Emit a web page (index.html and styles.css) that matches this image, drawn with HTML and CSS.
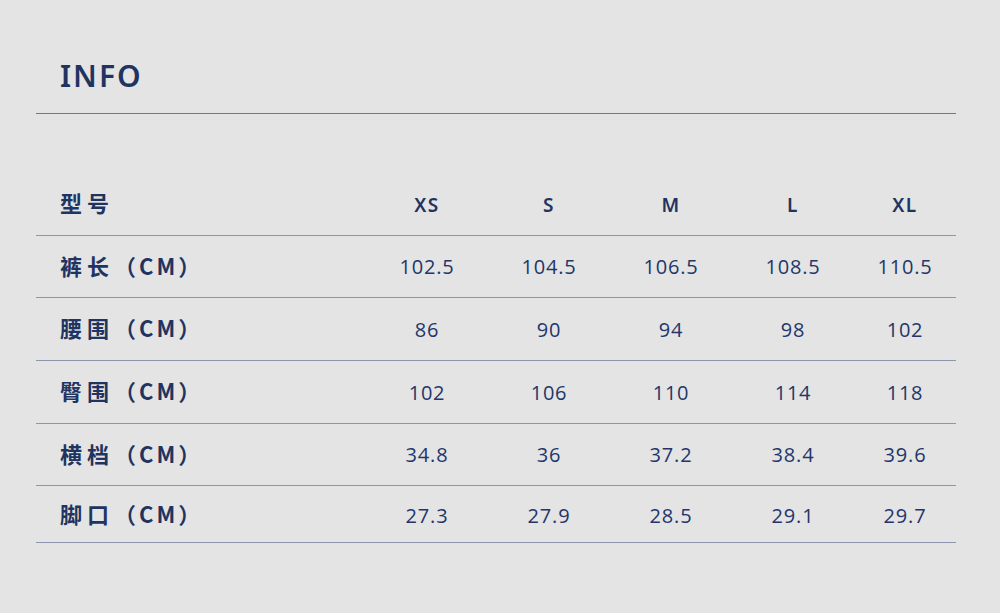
FILE: index.html
```html
<!DOCTYPE html>
<html lang="zh">
<head>
<meta charset="utf-8">
<link rel="stylesheet" href="styles.css">
</head>
<body>
<div class="page">
  <div class="head"><h1 class="title">INFO</h1></div>
  <div class="table">
    <div class="row header">
      <div class="label"><span class="zh">型号</span></div>
      <div class="cell">XS</div><div class="cell">S</div><div class="cell">M</div><div class="cell">L</div><div class="cell">XL</div>
    </div>
    <div class="row r62">
      <div class="label"><span class="zh">裤长</span><span class="unit">（CM）</span></div>
      <div class="cell">102.5</div><div class="cell">104.5</div><div class="cell">106.5</div><div class="cell">108.5</div><div class="cell">110.5</div>
    </div>
    <div class="row r63">
      <div class="label"><span class="zh">腰围</span><span class="unit">（CM）</span></div>
      <div class="cell">86</div><div class="cell">90</div><div class="cell">94</div><div class="cell">98</div><div class="cell">102</div>
    </div>
    <div class="row r63">
      <div class="label"><span class="zh">臀围</span><span class="unit">（CM）</span></div>
      <div class="cell">102</div><div class="cell">106</div><div class="cell">110</div><div class="cell">114</div><div class="cell">118</div>
    </div>
    <div class="row r62">
      <div class="label"><span class="zh">横档</span><span class="unit">（CM）</span></div>
      <div class="cell">34.8</div><div class="cell">36</div><div class="cell">37.2</div><div class="cell">38.4</div><div class="cell">39.6</div>
    </div>
    <div class="row last">
      <div class="label"><span class="zh">脚口</span><span class="unit">（CM）</span></div>
      <div class="cell">27.3</div><div class="cell">27.9</div><div class="cell">28.5</div><div class="cell">29.1</div><div class="cell">29.7</div>
    </div>
  </div>
</div>
</body>
</html>
```
FILE: styles.css
```css
html, body {
  margin: 0;
  padding: 0;
  background: #e4e4e4;
}
body {
  font-family: "Noto Sans", "Noto Sans CJK SC", sans-serif;
  color: #1f3461;
}
.page {
  width: 920px;
  margin-left: 36px;
}
.head {
  height: 114px;
  border-bottom: 1px solid #6f7890;
  box-sizing: border-box;
  display: flex;
  align-items: flex-start;
}
.title {
  margin: 54px 0 0 24px;
  font-size: 30px;
  line-height: 44px;
  font-weight: 600;
  letter-spacing: 2px;
}
.table {
  margin-top: 62px;
}
.row {
  display: grid;
  grid-template-columns: 330px 122px 122px 122px 122px 102px;
  align-items: center;
  border-bottom: 1.5px solid #8c95ab;
  box-sizing: border-box;
}
.row.header {
  height: 60px;
  padding-bottom: 2px;
}
.row.r62 {
  height: 62px;
}
.row.r63 {
  height: 63px;
}
.row.last {
  height: 57px;
  padding-top: 2px;
}
.label {
  padding-left: 24px;
  margin-bottom: 4px;
  font-family: "Noto Sans CJK SC", sans-serif;
  font-size: 22px;
  line-height: 30px;
  font-weight: 600;
  white-space: nowrap;
}
.header .label {
  margin-bottom: 6px;
}
.zh {
  letter-spacing: 5px;
}
.unit {
  letter-spacing: 3px;
}
.cell {
  text-align: center;
  font-family: "Open Sans", "Noto Sans", sans-serif;
  font-size: 20px;
  font-weight: 370;
  letter-spacing: 0.8px;
  color: #22366a;
}
.header .cell {
  font-family: "Noto Sans", sans-serif;
  font-weight: 600;
  font-size: 19px;
  letter-spacing: 1.5px;
  color: #1f3461;
}
```
